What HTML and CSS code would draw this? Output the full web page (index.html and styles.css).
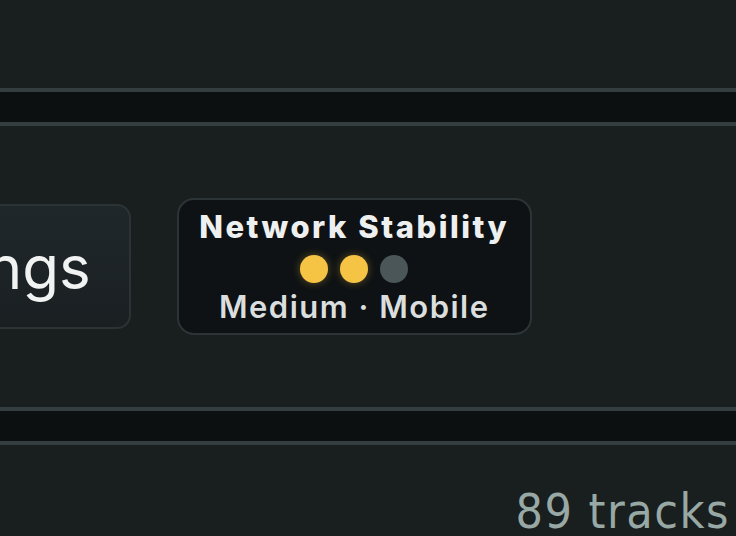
FILE: index.html
```
<!DOCTYPE html>
<html lang="en">
<head>
  <meta charset="UTF-8">
  <title>Player - Status</title>
  <link rel="stylesheet" href="styles.css">
</head>
<body>

  <div class="panel panel-top"></div>

  <div class="divider"></div>

  <div class="panel panel-controls">
    <div class="controls-row">
      <button class="settings-btn">Settings</button>

      <div class="network-card">
        <div class="network-title">Network Stability</div>
        <div class="network-dots">
          <span class="dot on"></span>
          <span class="dot on"></span>
          <span class="dot"></span>
        </div>
        <div class="network-sub">Medium · Mobile</div>
      </div>
    </div>
  </div>

  <div class="divider"></div>

  <div class="panel panel-footer">
    <span class="track-count">89 tracks</span>
  </div>

</body>
</html>
```

FILE: styles.css
```
body {
  margin: 0;
  background-color: #191e1e;
  font-family: Inter, "Liberation Sans", Arial, sans-serif;
  overflow: hidden;
}

.panel {
  background-color: #191e1e;
}

.panel-top {
  height: 88px;
}

.divider {
  height: 30px;
  background-color: #0c1011;
  border-top: 4px solid #343d3f;
  border-bottom: 4px solid #343d3f;
}

.panel-controls {
  height: 281px;
  display: flex;
  align-items: center;
}

.controls-row {
  display: flex;
  align-items: center;
  gap: 46px;
  margin-left: -181px;
}

.settings-btn {
  height: 125px;
  padding: 0 38px 0 40px;
  background: linear-gradient(#20272a, #1a2022);
  border: 2px solid #2b3335;
  border-radius: 14px;
  color: #f1f3f3;
  font-family: Inter, "Liberation Sans", Arial, sans-serif;
  font-size: 60px;
}

.network-card {
  width: 351px;
  height: 122px;
  padding-top: 11px;
  display: flex;
  flex-direction: column;
  align-items: center;
  background-color: #0e1214;
  border: 2px solid #2c3436;
  border-radius: 17px;
}

.network-title {
  color: #eef0f0;
  font-size: 31px;
  font-weight: 800;
  letter-spacing: 2.5px;
  line-height: 32px;
}

.network-dots {
  display: flex;
  gap: 12px;
  margin-top: 12px;
}

.dot {
  width: 28px;
  height: 28px;
  border-radius: 50%;
  background-color: #4a5657;
}

.dot.on {
  background-color: #f6c445;
  box-shadow: 0 0 8px rgba(246, 196, 69, 0.35);
}

.network-sub {
  margin-top: 8px;
  color: #dadede;
  font-size: 31px;
  font-weight: 600;
  letter-spacing: 1.5px;
  line-height: 32px;
}

.panel-footer {
  height: 89px;
  display: flex;
  justify-content: flex-end;
  align-items: flex-start;
  padding-top: 42px;
  padding-right: 6px;
  box-sizing: border-box;
}

.track-count {
  color: #98a8a4;
  font-family: "DejaVu Sans", "Liberation Sans", sans-serif;
  font-stretch: condensed;
  font-size: 48px;
  letter-spacing: 1.5px;
  line-height: 48px;
  white-space: nowrap;
}
```
